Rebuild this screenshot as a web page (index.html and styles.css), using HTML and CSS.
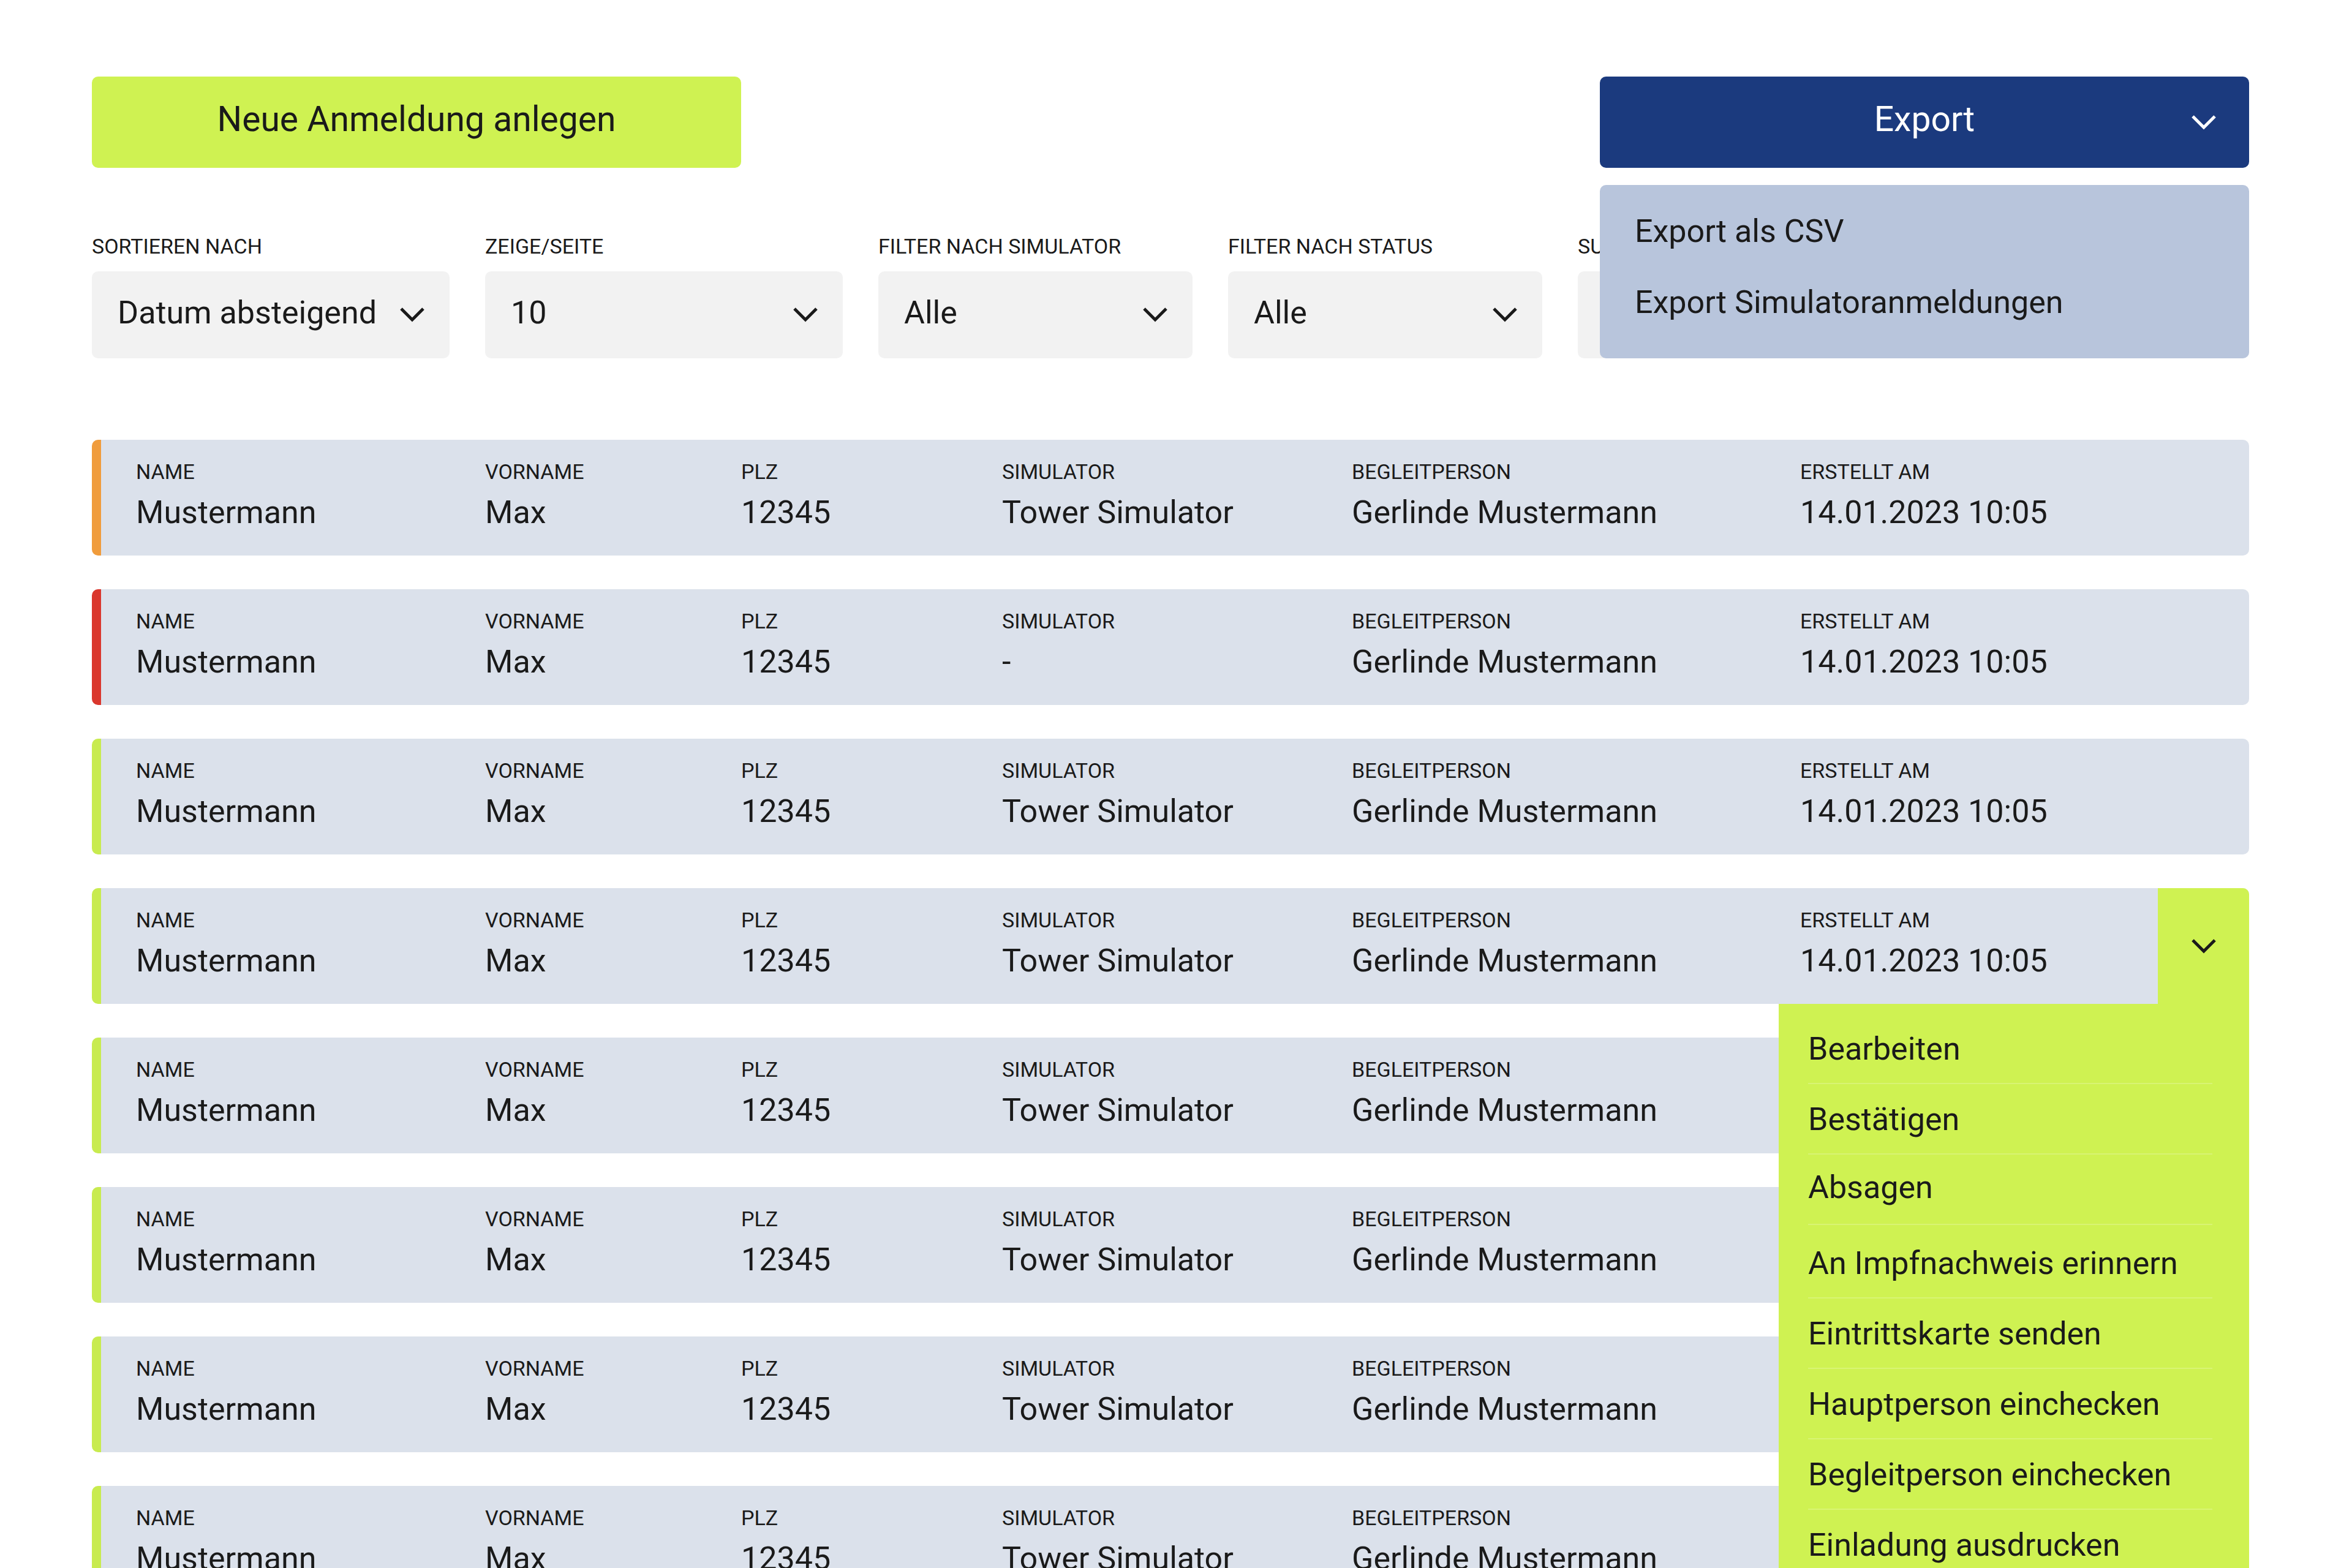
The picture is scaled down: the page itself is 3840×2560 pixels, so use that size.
FILE: index.html
```html
<html>
<head>
  <title>Anmeldungen</title>
  <link rel="stylesheet" href="styles.css">
</head>
<body>
  <div class="page">
    <div class="toolbar">
      <button class="btn btn-new">Neue Anmeldung anlegen</button>
      <div class="export">
        <button class="btn btn-export">Export
          <svg class="chev" viewBox="0 0 42 26" width="42" height="26"><polyline points="3,3 21,21 39,3" fill="none" stroke="currentColor" stroke-width="5"/></svg>
        </button>
        <div class="export-menu">
          <div class="export-item">Export als CSV</div>
          <div class="export-item">Export Simulatoranmeldungen</div>
        </div>
      </div>
    </div>

    <div class="filters">
      <div class="filter f-wide">
        <label>SORTIEREN NACH</label>
        <div class="select"><span>Datum absteigend</span><svg class="chev" viewBox="0 0 42 26" width="42" height="26"><polyline points="3,3 21,21 39,3" fill="none" stroke="currentColor" stroke-width="5"/></svg></div>
      </div>
      <div class="filter f-wide">
        <label>ZEIGE/SEITE</label>
        <div class="select"><span>10</span><svg class="chev" viewBox="0 0 42 26" width="42" height="26"><polyline points="3,3 21,21 39,3" fill="none" stroke="currentColor" stroke-width="5"/></svg></div>
      </div>
      <div class="filter f-small">
        <label>FILTER NACH SIMULATOR</label>
        <div class="select"><span>Alle</span><svg class="chev" viewBox="0 0 42 26" width="42" height="26"><polyline points="3,3 21,21 39,3" fill="none" stroke="currentColor" stroke-width="5"/></svg></div>
      </div>
      <div class="filter f-small">
        <label>FILTER NACH STATUS</label>
        <div class="select"><span>Alle</span><svg class="chev" viewBox="0 0 42 26" width="42" height="26"><polyline points="3,3 21,21 39,3" fill="none" stroke="currentColor" stroke-width="5"/></svg></div>
      </div>
      <div class="filter f-search">
        <label>SUCHE</label>
        <div class="select"></div>
      </div>
    </div>

    <div class="list">
      <div class="entry status-open">
        <div class="cell"><div class="cell-label">NAME</div><div class="cell-value">Mustermann</div></div>
        <div class="cell"><div class="cell-label">VORNAME</div><div class="cell-value">Max</div></div>
        <div class="cell"><div class="cell-label">PLZ</div><div class="cell-value">12345</div></div>
        <div class="cell"><div class="cell-label">SIMULATOR</div><div class="cell-value">Tower Simulator</div></div>
        <div class="cell"><div class="cell-label">BEGLEITPERSON</div><div class="cell-value">Gerlinde Mustermann</div></div>
        <div class="cell"><div class="cell-label">ERSTELLT AM</div><div class="cell-value">14.01.2023 10:05</div></div>
        <div class="actions"></div>
      </div>
      <div class="entry status-cancel">
        <div class="cell"><div class="cell-label">NAME</div><div class="cell-value">Mustermann</div></div>
        <div class="cell"><div class="cell-label">VORNAME</div><div class="cell-value">Max</div></div>
        <div class="cell"><div class="cell-label">PLZ</div><div class="cell-value">12345</div></div>
        <div class="cell"><div class="cell-label">SIMULATOR</div><div class="cell-value">-</div></div>
        <div class="cell"><div class="cell-label">BEGLEITPERSON</div><div class="cell-value">Gerlinde Mustermann</div></div>
        <div class="cell"><div class="cell-label">ERSTELLT AM</div><div class="cell-value">14.01.2023 10:05</div></div>
        <div class="actions"></div>
      </div>
      <div class="entry">
        <div class="cell"><div class="cell-label">NAME</div><div class="cell-value">Mustermann</div></div>
        <div class="cell"><div class="cell-label">VORNAME</div><div class="cell-value">Max</div></div>
        <div class="cell"><div class="cell-label">PLZ</div><div class="cell-value">12345</div></div>
        <div class="cell"><div class="cell-label">SIMULATOR</div><div class="cell-value">Tower Simulator</div></div>
        <div class="cell"><div class="cell-label">BEGLEITPERSON</div><div class="cell-value">Gerlinde Mustermann</div></div>
        <div class="cell"><div class="cell-label">ERSTELLT AM</div><div class="cell-value">14.01.2023 10:05</div></div>
        <div class="actions"></div>
      </div>
      <div class="entry open">
        <div class="cell"><div class="cell-label">NAME</div><div class="cell-value">Mustermann</div></div>
        <div class="cell"><div class="cell-label">VORNAME</div><div class="cell-value">Max</div></div>
        <div class="cell"><div class="cell-label">PLZ</div><div class="cell-value">12345</div></div>
        <div class="cell"><div class="cell-label">SIMULATOR</div><div class="cell-value">Tower Simulator</div></div>
        <div class="cell"><div class="cell-label">BEGLEITPERSON</div><div class="cell-value">Gerlinde Mustermann</div></div>
        <div class="cell"><div class="cell-label">ERSTELLT AM</div><div class="cell-value">14.01.2023 10:05</div></div>
        <div class="actions"><svg class="chev" viewBox="0 0 42 26" width="42" height="26"><polyline points="3,3 21,21 39,3" fill="none" stroke="currentColor" stroke-width="5"/></svg></div>
        <ul class="action-menu">
          <li>Bearbeiten</li>
          <li>Bestätigen</li>
          <li class="item-short">Absagen</li>
          <li class="item-low">An Impfnachweis erinnern</li>
          <li>Eintrittskarte senden</li>
          <li>Hauptperson einchecken</li>
          <li>Begleitperson einchecken</li>
          <li>Einladung ausdrucken</li>
        </ul>
      </div>
      <div class="entry">
        <div class="cell"><div class="cell-label">NAME</div><div class="cell-value">Mustermann</div></div>
        <div class="cell"><div class="cell-label">VORNAME</div><div class="cell-value">Max</div></div>
        <div class="cell"><div class="cell-label">PLZ</div><div class="cell-value">12345</div></div>
        <div class="cell"><div class="cell-label">SIMULATOR</div><div class="cell-value">Tower Simulator</div></div>
        <div class="cell"><div class="cell-label">BEGLEITPERSON</div><div class="cell-value">Gerlinde Mustermann</div></div>
        <div class="cell"><div class="cell-label">ERSTELLT AM</div><div class="cell-value">14.01.2023 10:05</div></div>
        <div class="actions"></div>
      </div>
      <div class="entry">
        <div class="cell"><div class="cell-label">NAME</div><div class="cell-value">Mustermann</div></div>
        <div class="cell"><div class="cell-label">VORNAME</div><div class="cell-value">Max</div></div>
        <div class="cell"><div class="cell-label">PLZ</div><div class="cell-value">12345</div></div>
        <div class="cell"><div class="cell-label">SIMULATOR</div><div class="cell-value">Tower Simulator</div></div>
        <div class="cell"><div class="cell-label">BEGLEITPERSON</div><div class="cell-value">Gerlinde Mustermann</div></div>
        <div class="cell"><div class="cell-label">ERSTELLT AM</div><div class="cell-value">14.01.2023 10:05</div></div>
        <div class="actions"></div>
      </div>
      <div class="entry">
        <div class="cell"><div class="cell-label">NAME</div><div class="cell-value">Mustermann</div></div>
        <div class="cell"><div class="cell-label">VORNAME</div><div class="cell-value">Max</div></div>
        <div class="cell"><div class="cell-label">PLZ</div><div class="cell-value">12345</div></div>
        <div class="cell"><div class="cell-label">SIMULATOR</div><div class="cell-value">Tower Simulator</div></div>
        <div class="cell"><div class="cell-label">BEGLEITPERSON</div><div class="cell-value">Gerlinde Mustermann</div></div>
        <div class="cell"><div class="cell-label">ERSTELLT AM</div><div class="cell-value">14.01.2023 10:05</div></div>
        <div class="actions"></div>
      </div>
      <div class="entry">
        <div class="cell"><div class="cell-label">NAME</div><div class="cell-value">Mustermann</div></div>
        <div class="cell"><div class="cell-label">VORNAME</div><div class="cell-value">Max</div></div>
        <div class="cell"><div class="cell-label">PLZ</div><div class="cell-value">12345</div></div>
        <div class="cell"><div class="cell-label">SIMULATOR</div><div class="cell-value">Tower Simulator</div></div>
        <div class="cell"><div class="cell-label">BEGLEITPERSON</div><div class="cell-value">Gerlinde Mustermann</div></div>
        <div class="cell"><div class="cell-label">ERSTELLT AM</div><div class="cell-value">14.01.2023 10:05</div></div>
        <div class="actions"></div>
      </div>
    </div>
  </div>
</body>
</html>
```

FILE: styles.css
```css
/* Grundlayout */
* {
  box-sizing: border-box;
}
body {
  margin: 0;
  font-family: Roboto, "Liberation Sans", sans-serif;
  color: #1a1a1a;
  background: #fff;
}
.page {
  padding: 125px 168px 0 150px;
}

/* Obere Leiste mit den zwei Buttons */
.toolbar {
  display: flex;
  justify-content: space-between;
}
.btn {
  width: 1060px;
  height: 149px;
  border: none;
  border-radius: 10px;
  padding: 0 0 10px;
  font-family: inherit;
  font-size: 57px;
  color: #1a1a1a;
  cursor: pointer;
}
.btn-new {
  background: #cff252;
}
.export {
  position: relative;
}
.btn-export {
  position: relative;
  background: #1b3a7e;
  color: #fff;
}
.btn-export .chev {
  position: absolute;
  right: 53px;
  top: 50%;
  margin-top: -13px;
}
.export-menu {
  position: absolute;
  top: 177px;
  left: 0;
  right: 0;
  z-index: 3;
  background: #b8c5dc;
  border-radius: 10px;
  padding: 18px 54px 33px 57px;
}
.export-item {
  font-size: 52px;
  line-height: 61px;
  padding: 27px 0 28px;
}

/* Filter */
.filters {
  display: flex;
  gap: 58px;
  margin-top: 108px;
}
.f-wide {
  width: 584px;
}
.f-small {
  width: 513px;
}
.f-search {
  flex: 1;
}
.filter label {
  display: block;
  font-size: 34px;
  line-height: 40px;
  margin-bottom: 21px;
}
.select {
  height: 142px;
  background: #f2f2f2;
  border-radius: 10px;
  display: flex;
  align-items: center;
  justify-content: space-between;
  padding: 0 40px 0 42px;
  font-size: 52px;
  line-height: 61px;
}
.select span {
  margin-bottom: 8px;
}

/* Liste der Anmeldungen */
.list {
  margin-top: 133px;
}
.entry {
  position: relative;
  display: grid;
  grid-template-columns: 570px 418px 426px 571px 732px 1fr 149px;
  height: 189px;
  margin-bottom: 55px;
  padding-left: 57px;
  background: #dbe1eb;
  border-left: 15px solid #c8eb4f;
  border-radius: 10px;
}
.status-open {
  border-left-color: #f09c3c;
}
.status-cancel {
  border-left-color: #da372d;
}
.cell {
  padding-top: 32px;
  white-space: nowrap;
}
.cell-label {
  font-size: 34px;
  line-height: 40px;
  margin-bottom: 16px;
}
.cell-value {
  font-size: 52px;
  line-height: 61px;
}
.actions {
  display: flex;
  align-items: center;
  justify-content: center;
  border-radius: 0 10px 10px 0;
}

/* Aufgeklappte Zeile mit Aktionsmenü */
.entry.open {
  border-bottom-right-radius: 0;
}
.entry.open .actions {
  background: #cff252;
  border-radius: 0 10px 0 0;
}
.action-menu {
  position: absolute;
  top: 100%;
  right: 0;
  z-index: 2;
  width: 768px;
  margin: 0;
  padding: 16px 60px 0 48px;
  list-style: none;
  background: #cff252;
}
.action-menu li {
  font-size: 52px;
  line-height: 61px;
  padding: 27px 0 25px;
  border-bottom: 2px solid rgba(255, 255, 255, 0.2);
}
.action-menu .item-short {
  padding: 23px 0 29px;
}
.action-menu .item-low {
  padding: 32px 0 25px;
}
```
